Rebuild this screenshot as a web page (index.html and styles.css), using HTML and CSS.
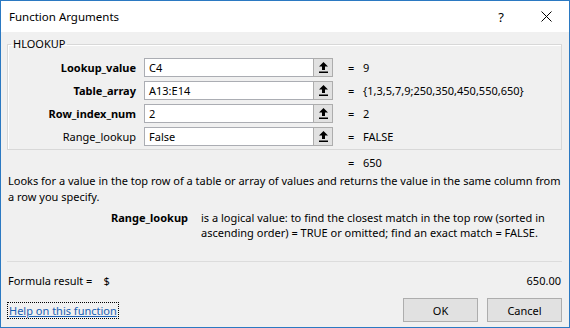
FILE: index.html
```html
<!DOCTYPE html>
<html lang="en">
<head>
    <meta charset="UTF-8">
    <title>Function Arguments</title>
    <link rel="stylesheet" href="styles.css">
</head>
<body>
    <div class="dialog">
        <!-- Title bar -->
        <header class="titlebar">
            <span class="title">Function Arguments</span>
            <span class="help-btn">?</span>
            <span class="close-btn">
                <svg width="11" height="11" viewBox="0 0 11 11">
                    <path d="M0.5 0.5 L10.5 10.5 M10.5 0.5 L0.5 10.5" stroke="#000" stroke-width="1" fill="none"/>
                </svg>
            </span>
        </header>

        <div class="content">
            <!-- Arguments -->
            <fieldset class="args">
                <legend>HLOOKUP</legend>
                <div class="arg-grid">
                    <label class="arg-label required">Lookup_value</label>
                    <div class="arg-input">C4</div>
                    <button class="ref-btn"><svg width="9" height="11" viewBox="0 0 9 11"><path d="M4.5 0 L9 4.5 L6 4.5 L6 8 L3 8 L3 4.5 L0 4.5 Z" fill="#000"/><rect x="0" y="9.5" width="9" height="1.5" fill="#000"/></svg></button>
                    <div class="arg-result"><span class="eq">=</span><span class="arg-value">9</span></div>

                    <label class="arg-label required">Table_array</label>
                    <div class="arg-input">A13:E14</div>
                    <button class="ref-btn"><svg width="9" height="11" viewBox="0 0 9 11"><path d="M4.5 0 L9 4.5 L6 4.5 L6 8 L3 8 L3 4.5 L0 4.5 Z" fill="#000"/><rect x="0" y="9.5" width="9" height="1.5" fill="#000"/></svg></button>
                    <div class="arg-result"><span class="eq">=</span><span class="arg-value">{1,3,5,7,9;250,350,450,550,650}</span></div>

                    <label class="arg-label required">Row_index_num</label>
                    <div class="arg-input">2</div>
                    <button class="ref-btn"><svg width="9" height="11" viewBox="0 0 9 11"><path d="M4.5 0 L9 4.5 L6 4.5 L6 8 L3 8 L3 4.5 L0 4.5 Z" fill="#000"/><rect x="0" y="9.5" width="9" height="1.5" fill="#000"/></svg></button>
                    <div class="arg-result"><span class="eq">=</span><span class="arg-value">2</span></div>

                    <label class="arg-label">Range_lookup</label>
                    <div class="arg-input">False</div>
                    <button class="ref-btn"><svg width="9" height="11" viewBox="0 0 9 11"><path d="M4.5 0 L9 4.5 L6 4.5 L6 8 L3 8 L3 4.5 L0 4.5 Z" fill="#000"/><rect x="0" y="9.5" width="9" height="1.5" fill="#000"/></svg></button>
                    <div class="arg-result"><span class="eq">=</span><span class="arg-value">FALSE</span></div>
                </div>
            </fieldset>

            <!-- Result of the function -->
            <div class="fn-result">
                <span class="eq">=</span>
                <span class="arg-value">650</span>
            </div>

            <p class="description">Looks for a value in the top row of a table or array of values and returns the value in the same column from a row you specify.</p>

            <div class="arg-help">
                <span class="arg-help-name">Range_lookup</span>
                <span class="arg-help-text">is a logical value: to find the closest match in the top row (sorted in ascending order) = TRUE or omitted; find an exact match = FALSE.</span>
            </div>

            <!-- Footer -->
            <div class="formula-result">
                <span>Formula result =</span>
                <span class="currency">$</span>
                <span class="total">650.00</span>
            </div>

            <div class="actions">
                <a href="#" class="help-link">Help on this function</a>
                <button class="btn">OK</button>
                <button class="btn">Cancel</button>
            </div>
        </div>
    </div>
</body>
</html>
```

FILE: styles.css
```css
body {
    margin: 0;
    padding: 0;
    font-family: "Noto Sans", "Open Sans", sans-serif;
    font-size: 11px;
    color: #000;
    background-color: #f0f0f0;
}

.dialog {
    width: 570px;
    height: 328px;
    box-sizing: border-box;
    border: 1px solid #2b79c2;
    display: flex;
    flex-direction: column;
    background-color: #f0f0f0;
}

/* Title bar */
.titlebar {
    height: 31px;
    background-color: #fff;
    display: flex;
    align-items: center;
    padding: 0 0 0 8px;
    flex-shrink: 0;
}

.titlebar .title {
    flex: 1;
    font-size: 11.5px;
}

.help-btn {
    width: 44px;
    text-align: center;
    font-size: 13px;
}

.close-btn {
    width: 46px;
    display: flex;
    justify-content: center;
}

/* Content */
.content {
    flex: 1;
    padding: 0 7px 0 6px;
    display: flex;
    flex-direction: column;
}

.args {
    margin: 4px 0 0 0;
    padding: 6px 0 3px 0;
    border: 1px solid #d8d8d8;
    box-shadow: inset 1px 1px 0 #fff;
}

.args legend {
    padding: 0 2px;
    margin-left: 3px;
    line-height: 16px;
}

.arg-grid {
    display: grid;
    grid-template-columns: 136px 169px 20px 1fr;
    grid-auto-rows: 19px;
    row-gap: 4px;
    align-items: center;
}

.arg-label {
    text-align: right;
    padding-right: 8px;
}

.arg-label.required {
    font-weight: bold;
}

.arg-input {
    height: 19px;
    box-sizing: border-box;
    background-color: #fff;
    border: 1px solid #abadb3;
    border-right: none;
    padding: 0 4px;
    line-height: 17px;
}

.ref-btn {
    height: 19px;
    width: 20px;
    margin: 0;
    padding: 0;
    box-sizing: border-box;
    background-color: #e1e1e1;
    border: 1px solid #adadad;
    display: flex;
    align-items: center;
    justify-content: center;
}

.arg-result {
    display: flex;
    padding-left: 15px;
    white-space: nowrap;
}

.eq {
    width: 15px;
}

.fn-result {
    display: flex;
    padding-left: 341px;
    height: 16px;
    line-height: 16px;
    margin-top: 5px;
}

.description {
    margin: 2px 0 0 1px;
    line-height: 16px;
}

.arg-help {
    display: flex;
    margin-top: 5px;
    line-height: 15px;
}

.arg-help-name {
    width: 181px;
    flex-shrink: 0;
    text-align: right;
    font-weight: bold;
    padding-right: 13px;
}

.arg-help-text {
    flex: 1;
    padding-right: 6px;
}

.formula-result {
    display: flex;
    border-top: 1px solid #dcdcdc;
    margin-top: 21px;
    padding: 11px 1px 0 1px;
    line-height: 16px;
}

.formula-result .currency {
    padding-left: 11px;
}

.formula-result .total {
    margin-left: auto;
}

.actions {
    display: flex;
    align-items: center;
    margin-top: 9px;
}

.help-link {
    color: #1a5fb4;
    text-decoration: underline;
    outline: 1px dotted #000;
    padding: 0 1px;
    margin-left: 1px;
    margin-right: auto;
}

.btn {
    width: 75px;
    height: 24px;
    margin-left: 9px;
    font-family: "Noto Sans", "Open Sans", sans-serif;
    font-size: 11px;
    background-color: #e1e1e1;
    border: 1px solid #adadad;
    padding: 0;
    color: #000;
}
```
